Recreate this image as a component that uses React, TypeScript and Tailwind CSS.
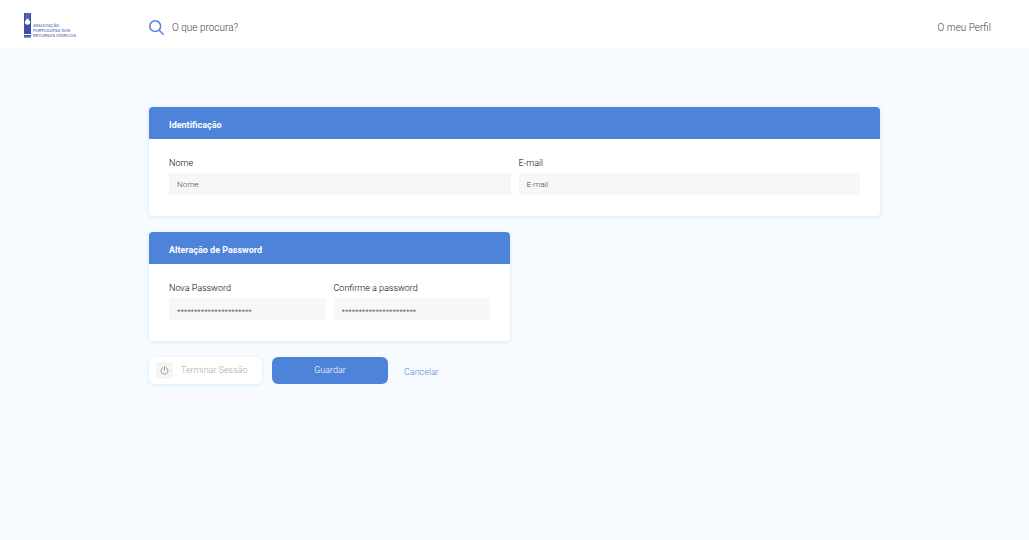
import { useState } from 'react'
import type { ReactNode } from 'react'

type FieldProps = {
  id: string
  label: string
  type?: string
  placeholder: string
}

function Logo() {
  return (
    <a href="#" aria-label="Associação Portuguesa dos Recursos Hídricos" className="mt-0.5 flex w-[125px] shrink-0 items-end gap-0.5 text-[#3d4fa8]">
      <svg className="h-[25px] w-[7px]" viewBox="0 0 7 25" fill="none">
        <path d="M0 0h7v21H0z" fill="#3d4fa8" />
        <path d="M2.3 0v7M4.7 0v7" stroke="#8d9bd2" strokeWidth="0.6" />
        <path d="M3.5 5.200c.4 1.2 2.7 2 2.7 3.9a2.7 2.7 0 0 1-5.4 0c0-1.900 2.300-2.700 2.700-3.900z" fill="#fff" />
        <path d="M0 22h7v2.600H0z" fill="#3d4fa8" />
        <path d="M0 23.300h7" stroke="#8d9bd2" strokeWidth="0.5" />
      </svg>
      <span className="font-['DejaVu_Sans',sans-serif] text-[4px] leading-[5px] font-normal whitespace-nowrap">
        ASSOCIAÇÃO
        <br />
        PORTUGUESA DOS
        <br />
        RECURSOS HÍDRICOS
      </span>
    </a>
  )
}

function Card({ title, children }: { title: string; children: ReactNode }) {
  return (
    <section className="overflow-hidden rounded bg-white shadow-[0_1px_4px_#d3e8fb]">
      <h2 className="bg-[#4d84da] px-5 pt-[11px] pb-[7px] text-[9px] leading-[14px] font-bold text-white">{title}</h2>
      <div className="grid grid-cols-2 gap-2 px-5 pt-[17px] pb-[21px]">{children}</div>
    </section>
  )
}

function Field({ id, label, type = 'text', placeholder }: FieldProps) {
  const [value, setValue] = useState('')

  return (
    <div className="min-w-0">
      <label htmlFor={id} className="mb-[3px] block text-[9px] leading-[14px] text-black">
        {label}
      </label>
      <input
        id={id}
        type={type}
        value={value}
        placeholder={placeholder}
        onChange={(e) => setValue(e.target.value)}
        className={`block h-[22px] w-full bg-[#f7f7f7] px-2 text-[8px] text-[#333] outline-none placeholder:text-[#444] ${
          type === 'password' ? 'pt-1' : ''
        }`}
      />
    </div>
  )
}

export default function App() {
  const [search, setSearch] = useState('')

  return (
    <div className="min-h-screen bg-[#f7fbff] font-['Roboto',sans-serif] font-light">
      <header className="flex h-12 items-center bg-white pr-[38px] pl-6 text-[10px] text-[#444]">
        <Logo />
        <label htmlFor="search" className="mt-1.5 mr-2 shrink-0" aria-label="Pesquisar">
          <svg className="h-[15px] w-[15px]" viewBox="0 0 15 15" fill="none" stroke="#4d84da" strokeWidth="1.5" strokeLinecap="round">
            <circle cx="6.200" cy="6.200" r="5.400" />
            <path d="M10.200 10.200l4 4" />
          </svg>
        </label>
        <input
          id="search"
          type="search"
          value={search}
          onChange={(e) => setSearch(e.target.value)}
          placeholder="O que procura?"
          className="mt-1.5 min-w-0 flex-1 outline-none placeholder:text-[#444]"
        />
        <a href="#" className="mt-1.5">
          O meu Perfil
        </a>
      </header>

      <main className="px-[149px] pt-[59px]">
        <form onSubmit={(e) => e.preventDefault()}>
          <Card title="Identificação">
            <Field id="name" label="Nome" placeholder="Nome" />
            <Field id="email" label="E-mail" type="email" placeholder="E-mail" />
          </Card>

          <div className="mt-4 grid grid-cols-2 gap-[9px]">
            <Card title="Alteração de Password">
              <Field id="password" label="Nova Password" type="password" placeholder="**********************" />
              <Field id="confirm" label="Confirme a password" type="password" placeholder="**********************" />
            </Card>
          </div>

          <div className="mt-4 flex items-center">
            <button type="button" className="flex h-[27px] w-[113px] items-center gap-2 rounded-md bg-white px-[7px] text-[9px] text-[#aaa] shadow-[0_1px_4px_#d3e8fb]">
              <span className="flex h-[17px] w-[17px] items-center justify-center rounded-xs bg-[#f5f5f5]">
                <svg className="h-[9px] w-[9px]" viewBox="0 0 9 9" fill="none" stroke="#999" strokeWidth="1" strokeLinecap="round">
                  <path d="M2.600 1.700a3.500 3.500 0 1 0 3.800 0M4.500 0.500v3.700" />
                </svg>
              </span>
              Terminar Sessão
            </button>
            <button type="submit" className="ml-[10px] h-[27px] w-[116px] rounded-md bg-[#4d84da] text-[9px] text-white">
              Guardar
            </button>
            <a href="#" className="ml-4 pt-1 text-[9px] text-[#4d84da]">
              Cancelar
            </a>
          </div>
        </form>
      </main>
    </div>
  )
}
